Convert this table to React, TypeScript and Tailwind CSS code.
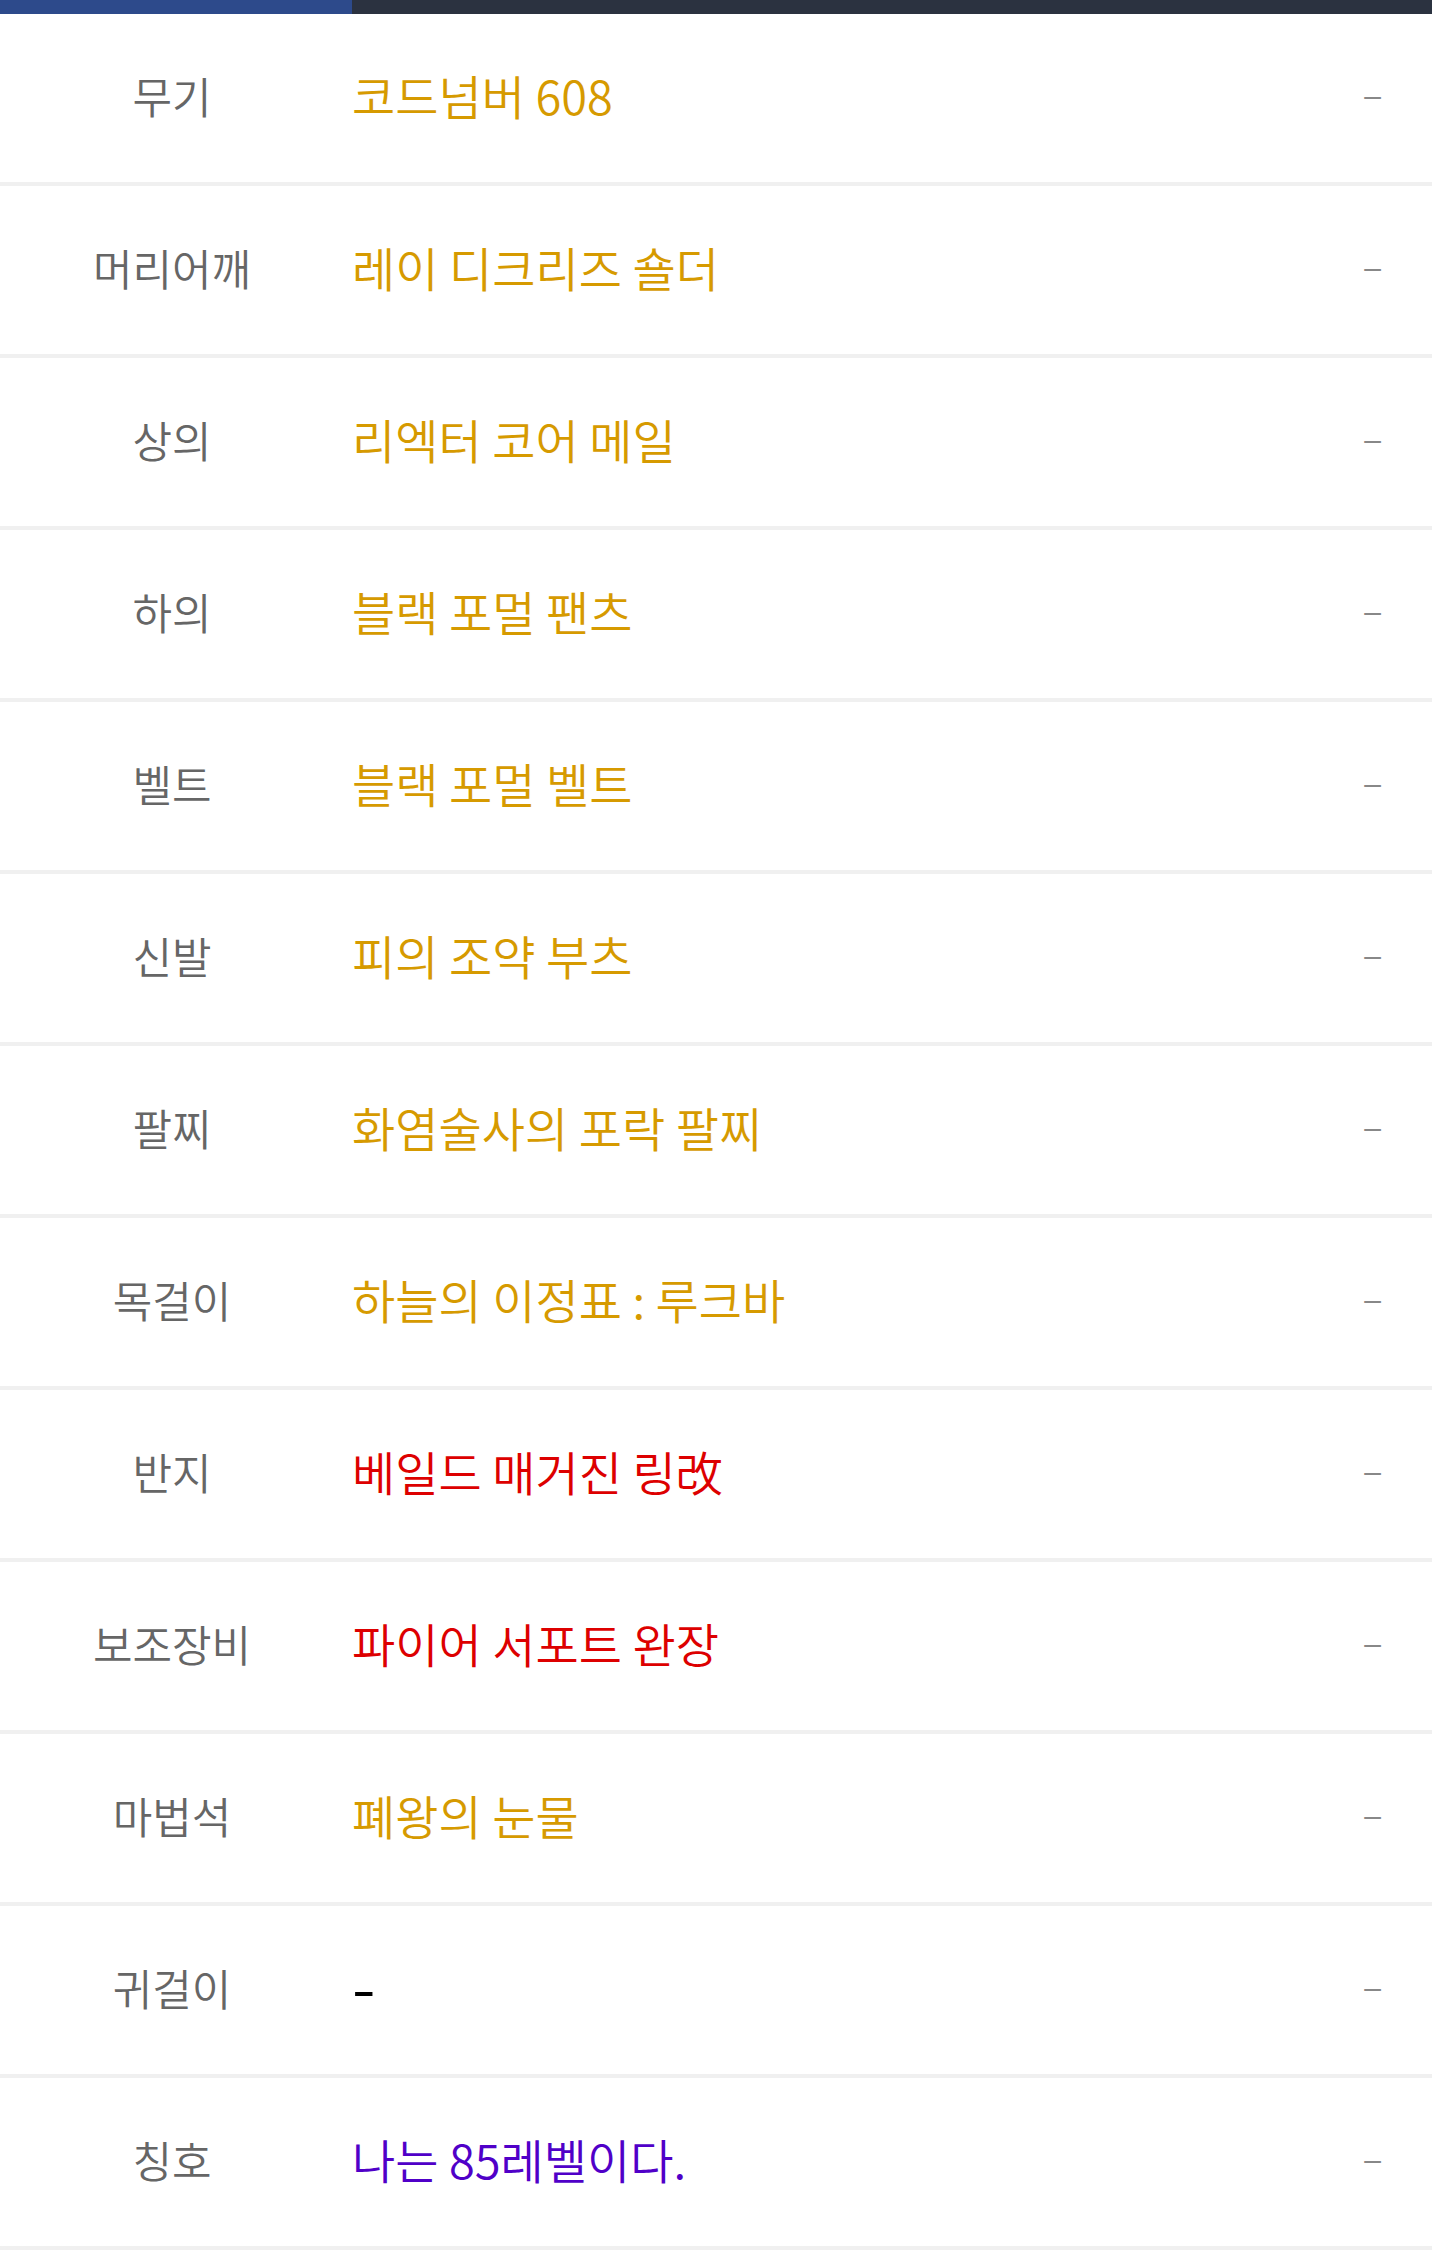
import React from 'react';

type Item = { slot: string; name: string; tone: 'gold' | 'red' | 'purple' | 'none' };

const items: Item[] = [
  { slot: '무기', name: '코드넘버 608', tone: 'gold' },
  { slot: '머리어깨', name: '레이 디크리즈 숄더', tone: 'gold' },
  { slot: '상의', name: '리엑터 코어 메일', tone: 'gold' },
  { slot: '하의', name: '블랙 포멀 팬츠', tone: 'gold' },
  { slot: '벨트', name: '블랙 포멀 벨트', tone: 'gold' },
  { slot: '신발', name: '피의 조약 부츠', tone: 'gold' },
  { slot: '팔찌', name: '화염술사의 포락 팔찌', tone: 'gold' },
  { slot: '목걸이', name: '하늘의 이정표 : 루크바', tone: 'gold' },
  { slot: '반지', name: '베일드 매거진 링改', tone: 'red' },
  { slot: '보조장비', name: '파이어 서포트 완장', tone: 'red' },
  { slot: '마법석', name: '폐왕의 눈물', tone: 'gold' },
  { slot: '귀걸이', name: '-', tone: 'none' },
  { slot: '칭호', name: '나는 85레벨이다.', tone: 'purple' },
];

const toneClass = {
  gold: 'text-[#d69a00]',
  red: 'text-[#dd0000]',
  purple: 'text-[#5000c8]',
  none: 'text-black',
};

export default function App() {
  return (
    <div className="w-full min-h-[2263px] bg-white font-['Noto_Sans_CJK_KR','Noto_Sans',sans-serif]">
      {/* tab indicator */}
      <div className="flex h-[14px] bg-[#2b3240]">
        <div className="w-[352px] bg-[#2d4a8b]" />
      </div>

      {items.map((it) => (
        <div key={it.slot} className="flex items-center h-[172px] pb-[6px] border-b-4 border-[#f0f0f0]">
          <div className="w-[344px] text-center text-[43px] font-[350] text-[#666666]">{it.slot}</div>
          <div className={`flex-1 pl-2 text-[47px] font-[350] ${toneClass[it.tone]}`}>
            {it.tone === 'none' ? <span className="inline-block scale-x-[1.4] origin-left font-medium">-</span> : it.name}
          </div>
          <div className="pr-[51px] text-[30px] text-[#888888] font-['Liberation_Sans',sans-serif]">–</div>
        </div>
      ))}
    </div>
  );
}
